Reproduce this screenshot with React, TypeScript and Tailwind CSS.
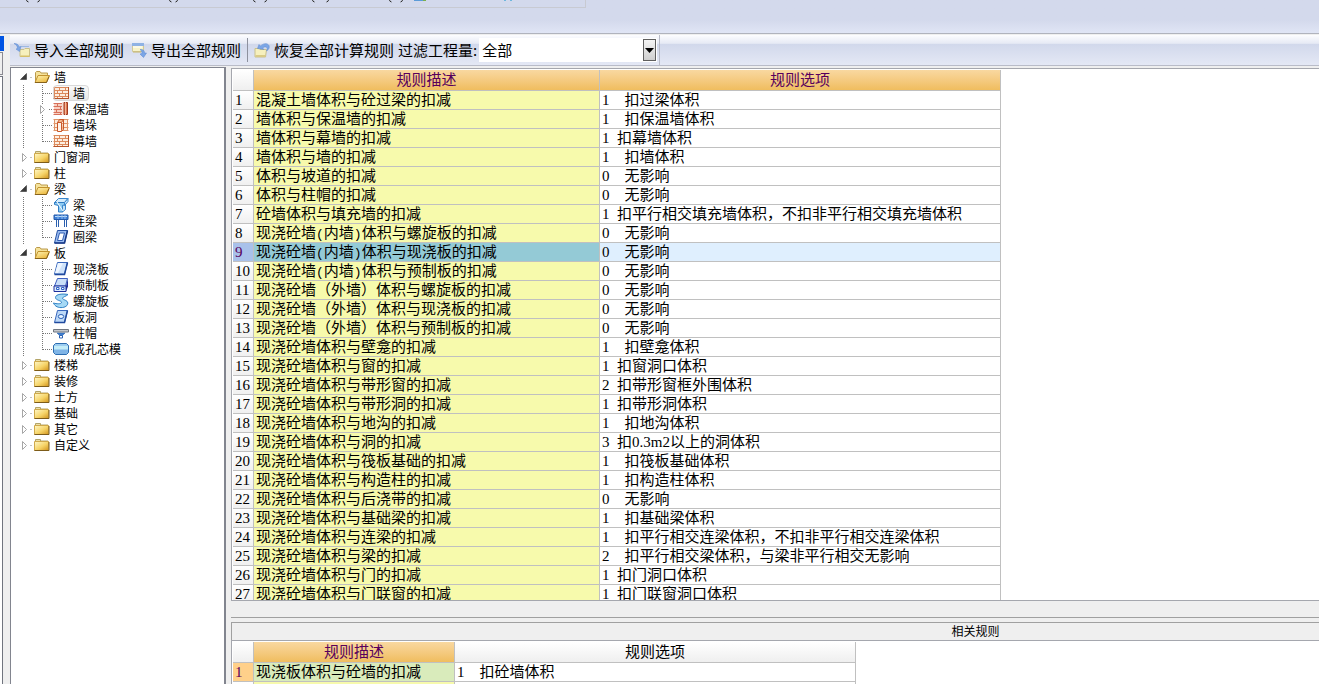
import type { ReactNode } from "react";
import { clsx } from "clsx";

type IconName =
  | "brick"
  | "insulated"
  | "pier"
  | "beam"
  | "linkBeam"
  | "ringBeam"
  | "slab"
  | "precast"
  | "spiral"
  | "hole"
  | "cap"
  | "core";

interface TreeChild {
  name: string;
  icon: IconName;
  expandable?: boolean;
  selected?: boolean;
}

interface TreeGroup {
  name: string;
  children?: TreeChild[];
}

interface Rule {
  desc: string;
  option: string;
}

const tree: TreeGroup[] = [
  {
    name: "墙",
    children: [
      { name: "墙", icon: "brick", selected: true },
      { name: "保温墙", icon: "insulated", expandable: true },
      { name: "墙垛", icon: "pier" },
      { name: "幕墙", icon: "brick" },
    ],
  },
  { name: "门窗洞" },
  { name: "柱" },
  {
    name: "梁",
    children: [
      { name: "梁", icon: "beam" },
      { name: "连梁", icon: "linkBeam" },
      { name: "圈梁", icon: "ringBeam" },
    ],
  },
  {
    name: "板",
    children: [
      { name: "现浇板", icon: "slab" },
      { name: "预制板", icon: "precast" },
      { name: "螺旋板", icon: "spiral" },
      { name: "板洞", icon: "hole" },
      { name: "柱帽", icon: "cap" },
      { name: "成孔芯模", icon: "core" },
    ],
  },
  { name: "楼梯" },
  { name: "装修" },
  { name: "土方" },
  { name: "基础" },
  { name: "其它" },
  { name: "自定义" },
];

const rules: Rule[] = [
  { desc: "混凝土墙体积与砼过梁的扣减", option: "1    扣过梁体积" },
  { desc: "墙体积与保温墙的扣减", option: "1    扣保温墙体积" },
  { desc: "墙体积与幕墙的扣减", option: "1  扣幕墙体积" },
  { desc: "墙体积与墙的扣减", option: "1    扣墙体积" },
  { desc: "体积与坡道的扣减", option: "0    无影响" },
  { desc: "体积与柱帽的扣减", option: "0    无影响" },
  { desc: "砼墙体积与填充墙的扣减", option: "1  扣平行相交填充墙体积，不扣非平行相交填充墙体积" },
  { desc: "现浇砼墙(内墙)体积与螺旋板的扣减", option: "0    无影响" },
  { desc: "现浇砼墙(内墙)体积与现浇板的扣减", option: "0    无影响" },
  { desc: "现浇砼墙(内墙)体积与预制板的扣减", option: "0    无影响" },
  { desc: "现浇砼墙（外墙）体积与螺旋板的扣减", option: "0    无影响" },
  { desc: "现浇砼墙（外墙）体积与现浇板的扣减", option: "0    无影响" },
  { desc: "现浇砼墙（外墙）体积与预制板的扣减", option: "0    无影响" },
  { desc: "现浇砼墙体积与壁龛的扣减", option: "1    扣壁龛体积" },
  { desc: "现浇砼墙体积与窗的扣减", option: "1  扣窗洞口体积" },
  { desc: "现浇砼墙体积与带形窗的扣减", option: "2  扣带形窗框外围体积" },
  { desc: "现浇砼墙体积与带形洞的扣减", option: "1  扣带形洞体积" },
  { desc: "现浇砼墙体积与地沟的扣减", option: "1    扣地沟体积" },
  { desc: "现浇砼墙体积与洞的扣减", option: "3  扣0.3m2以上的洞体积" },
  { desc: "现浇砼墙体积与筏板基础的扣减", option: "1    扣筏板基础体积" },
  { desc: "现浇砼墙体积与构造柱的扣减", option: "1    扣构造柱体积" },
  { desc: "现浇砼墙体积与后浇带的扣减", option: "0    无影响" },
  { desc: "现浇砼墙体积与基础梁的扣减", option: "1    扣基础梁体积" },
  { desc: "现浇砼墙体积与连梁的扣减", option: "1    扣平行相交连梁体积，不扣非平行相交连梁体积" },
  { desc: "现浇砼墙体积与梁的扣减", option: "2    扣平行相交梁体积，与梁非平行相交无影响" },
  { desc: "现浇砼墙体积与门的扣减", option: "1  扣门洞口体积" },
  { desc: "现浇砼墙体积与门联窗的扣减", option: "1  扣门联窗洞口体积" },
];

const Svg = ({ children }: { children: ReactNode }) => (
  <svg viewBox="0 0 16 16" className="size-4 shrink-0" aria-hidden="true">
    {children}
  </svg>
);

const ImportIcon = () => (
  <Svg>
    <path d="M6 7.500h4l1-1h4.500v8H6z" fill="#f6f0bd" stroke="#c9c08c" />
    <path d="M6.500 13.500h9v1.500h-9z" fill="#d6c069" />
    <path d="M7 4.500h8" stroke="#9db8e2" />
    <path d="M0 1.500c3 0 4.500 1 5 3.500l2-.5-1.500 5L2 7l1.500-.5C3.500 4 2.500 3 0 1.500z" fill="#7ba6e6" stroke="#5b86cc" strokeWidth=".5" />
  </Svg>
);

const ExportIcon = () => (
  <Svg>
    <path d="M1.500 1.500h11v8h-11z" fill="#f7f2c8" stroke="#cfc899" />
    <path d="M1 1h12v3H1z" fill="#8fb2e4" />
    <path d="M2 5h9" stroke="#fff" />
    <path d="M2 10h8" stroke="#c8b66b" />
    <path d="M9 7.500c3-.5 4.500 1 4.500 3.500h2L12.500 15.500 9 12l2-.5C11 9.500 10.500 8.500 9 7.500z" fill="#7ba6e6" stroke="#5b86cc" strokeWidth=".5" />
  </Svg>
);

const RestoreIcon = () => (
  <Svg>
    <path d="M1 6.500h4l1 1h6.500l-1 7.500H1z" fill="#f6f0bd" stroke="#c9c08c" />
    <path d="M1.500 13h10v2h-10z" fill="#d9cb87" />
    <path d="M3.500 6.500 5 2.500l1.500 1.500C9 1.500 13 .5 15 3.500c.7 2 0 4-2.500 5.500 1-2 1-3.500-.5-4-1.500-.3-2.500.3-3.500 1L10 7.500z" fill="#7ba6e6" stroke="#5b86cc" strokeWidth=".5" />
  </Svg>
);

const FolderClosed = () => (
  <Svg>
    <defs>
      <linearGradient id="fc" x1="0" y1="0" x2="1" y2="1">
        <stop offset="0" stopColor="#fff8c8" />
        <stop offset=".55" stopColor="#f6d468" />
        <stop offset="1" stopColor="#d2941c" />
      </linearGradient>
    </defs>
    <path d="M1.500 4V2.500h5V4h7.500v2h-12.500z" fill="#ecdfa8" stroke="#b3a468" />
    <path d="M.5 4.500h14v9H.5z" fill="url(#fc)" stroke="#d0a94a" />
    <path d="M.5 13.500h14.500V5" fill="none" stroke="#7d5c1a" />
  </Svg>
);

const FolderOpen = () => (
  <Svg>
    <defs>
      <linearGradient id="fo" x1="0" y1="0" x2=".7" y2="1">
        <stop offset="0" stopColor="#fff5b4" />
        <stop offset="1" stopColor="#ecb83e" />
      </linearGradient>
    </defs>
    <path d="M1.500 12V3.500l1-1H6l1 1.500h6.500V7" fill="#f5e29a" stroke="#bb9a4c" />
    <path d="M4 6.500h11.500L12.500 13.500H1z" fill="url(#fo)" stroke="#c2922e" />
    <path d="M1 13.500h11.500l2.500-6" fill="none" stroke="#86621c" />
  </Svg>
);

const leafIcons: Record<IconName, ReactNode> = {
  brick: (
    <>
      <path d="M1 2h14v12H1z" fill="#fdeee0" />
      <path
        d="M.5 2.500h15M.5 5.500h15M.5 8.500h15M.5 11.500h15M.5 13.500h15M1.500 2v12M6.500 2v3.500M12.500 2v3.500M4.500 5.500v3M9.500 5.500v3M6.500 8.500v3M12.500 8.500v3M4.500 11.500v2.500M9.500 11.500v2.500M15.500 2v12"
        stroke="#dc8a5c"
        fill="none"
      />
      <path d="M.5 13.500h15M15.500 2v12" stroke="#b8552a" fill="none" />
    </>
  ),
  insulated: (
    <>
      <path d="M1 2h9v12H1z" fill="#f8cfc0" />
      <path d="M.5 2.500h9M.5 5.500h9M.5 8.500h9M.5 11.500h9M.5 13.500h9M4.500 2v3.500M7.500 5.500v3M3.500 8.500v3M7.500 11.500v2" stroke="#d8705a" fill="none" />
      <path d="M9 1h3v13H9z" fill="#f7ddd2" />
      <path d="M11 1.500h3.500v12H11z" fill="#e07a52" stroke="#a03a20" />
      <path d="M12.500 1v13" stroke="#f3b699" />
    </>
  ),
  pier: (
    <>
      <path d="M1 2h14v12H1z" fill="#fdeee0" />
      <path d="M.5 2.500h15M.5 6.500h15M.5 10.500h15M.5 13.500h15M1.500 2v12M14.500 2v12" stroke="#e09468" fill="none" />
      <path d="M4.500 5.500h4v9h-4z" fill="#fff4ea" stroke="#c9582a" />
      <path d="m4.500 5.500 2-3h4l-2 3zM8.500 14.500l2-2v-10" fill="#f4b78c" stroke="#c9582a" />
    </>
  ),
  beam: (
    <>
      <path d="m1.500 5.500 4-4h9.500l-3.500 4z" fill="#d3ebfb" stroke="#3a87cc" />
      <path d="M1.500 5.500h10v3h-2v6.500h-4V8.500l-4-1z" fill="#8ecbf2" stroke="#2f7cc4" />
      <path d="m11.500 5.500 3.500-4v3l-3.500 4zM9.500 8.500l3-1v5l-3 2.500z" fill="#c4e3f8" stroke="#3a87cc" />
      <path d="m4 5 6 9" stroke="#fff" />
    </>
  ),
  linkBeam: (
    <>
      <path d="M1 2h14v4.500H1z" fill="#3e80d8" stroke="#2358a8" />
      <path d="M2 3.500h12" stroke="#bfdcf8" />
      <path d="M5 2v4M9 2v4M12 2v4" stroke="#8fbdf0" />
      <path d="M3.500 7v7M5.500 7v7M11.500 7v7M13.500 7v7" stroke="#2b5fae" />
    </>
  ),
  ringBeam: (
    <>
      <path d="M4.500 1.500h10L11.500 14H1.500z" fill="#9bbcf0" stroke="#2450a4" />
      <path d="M6.500 4h5L9.500 11.500H4.500z" fill="#fff" stroke="#2f5cb2" />
      <path d="M1.500 14h10l3-12.500" fill="none" stroke="#183a86" strokeWidth="1.500" />
    </>
  ),
  slab: (
    <>
      <path d="M4.500 1.500h10l-3 11.500H1.500z" fill="#cfe3fa" stroke="#3a68bd" />
      <path d="M5 2h5L5 12H2z" fill="#eef6ff" />
      <path d="M1.500 13.500h10l3-12" fill="none" stroke="#204a9e" strokeWidth="1.500" />
    </>
  ),
  precast: (
    <>
      <path d="M4.500 1.500h10L12.500 9h-11z" fill="#c9def8" stroke="#3d5fc0" />
      <path d="M1 9h12v5.500H1z" fill="#dcebfd" stroke="#1c2f9a" />
      <path d="m13 14.500 2-5v-8L13 9z" fill="#1f2f96" />
      <path d="M3.500 10.500h2.500v2H3.500zM8.500 10.500H11v2H8.500z" fill="#fff" stroke="#2e62c8" />
    </>
  ),
  spiral: (
    <path
      d="M15 1.500C10 .5 2.500 1 2.500 4.500c0 3 6.500 3 6 5-.5 1.700-5 1.500-8 .5 1.500 3.500 5 5 9 4.500s6-3 5-5.500c-1-2-5.500-2.500-5-4 .5-1.300 3.500-1.500 5.500-3.500z"
      fill="#a5d9f5"
      stroke="#2d7fc4"
    />
  ),
  hole: (
    <>
      <path d="M4.500 1.500h10l-3 12H1.500z" fill="#bcd8f7" stroke="#3a68bd" />
      <path d="M1.500 13.500h10l3-12" fill="none" stroke="#204a9e" strokeWidth="1.500" />
      <ellipse cx="8" cy="7.500" rx="2.700" ry="2" fill="#e9f4ff" stroke="#2d63b8" />
    </>
  ),
  cap: (
    <>
      <path d="M.5 4.500h15v2.500H.5z" fill="#c4c7cc" stroke="#707680" />
      <path d="M4 8h8l-2.500 2.500h-3z" fill="#3f7fd2" stroke="#265a9e" strokeWidth=".5" />
      <path d="M6.500 10.500h3v2.500h-3z" fill="#fff" stroke="#2c63b4" />
    </>
  ),
  core: (
    <>
      <path d="M2.500 2.500h11l2 2v7l-2 2h-11l-2-2v-7z" fill="#7fb4e6" stroke="#2d6db0" />
      <path d="M1 5h14v3.500H1z" fill="#c3ecf8" />
      <path d="M2.500 3h11l1.500 2H1z" fill="#9ccdf0" />
    </>
  ),
};

const Expanded = () => (
  <Svg>
    <path d="M10.500 4.500v6H4.500z" fill="#3a3a3a" stroke="#222" strokeWidth=".5" />
    <path d="M14.500 8.500h1.500" stroke="#888" strokeDasharray="1 1" />
  </Svg>
);

const Collapsed = () => (
  <Svg>
    <path d="m6.500 4.500 4 4-4 4z" fill="#fff" stroke="#a6a6a6" />
    <path d="M14.500 8.500h1.500" stroke="#888" strokeDasharray="1 1" />
  </Svg>
);

const Guide = ({ last, expandable }: { last: boolean; expandable?: boolean }) => (
  <svg viewBox="0 0 37 16" className="h-4 w-[37px] shrink-0" aria-hidden="true">
    <path d="M7.500 0v16" stroke="#777" strokeDasharray="1 1" />
    <path d={last ? "M26.500 0v9" : "M26.500 0v16"} stroke="#777" strokeDasharray="1 1" />
    <path d="M27 8.500h9" stroke="#777" strokeDasharray="1 1" />
    {expandable && (
      <>
        <path d="M23 3h9v11h-9z" fill="#fff" />
        <path d="m24.500 4.500 4 4-4 4z" fill="#fff" stroke="#a6a6a6" />
      </>
    )}
  </svg>
);

const TreeView = () => (
  <ul className="py-px pl-[5px] text-[12px] leading-4 text-black">
    {tree.map((group) => (
      <li key={group.name}>
        <div className="flex h-4 items-center">
          {group.children ? <Expanded /> : <Collapsed />}
          <span className="w-0.5" />
          {group.children ? <FolderOpen /> : <FolderClosed />}
          <span className="pl-1">{group.name}</span>
        </div>
        {group.children && (
          <ul>
            {group.children.map((child, i) => (
              <li key={child.name} className="flex h-4 items-center">
                <Guide last={i === group.children!.length - 1} expandable={child.expandable} />
                <span
                  className={clsx(
                    "flex h-4 items-center gap-1 rounded-sm pr-1",
                    child.selected && "bg-linear-to-b from-[#fafafa] to-[#e6e6e6] outline outline-[#d9d9d9] -outline-offset-1"
                  )}
                >
                  <Svg>{leafIcons[child.icon]}</Svg>
                  {child.name}
                </span>
              </li>
            ))}
          </ul>
        )}
      </li>
    ))}
  </ul>
);

// half-width brackets take half of a Chinese character
const RuleText = ({ text }: { text: string }) => (
  <>
    {text.split(/([()])/).map((part, i) =>
      part === "(" || part === ")" ? (
        <span key={i} className="font-['Liberation_Mono'] text-[13px] leading-none">
          {part}
        </span>
      ) : (
        part
      )
    )}
  </>
);

const cell = "h-[19px] overflow-hidden border-r border-b border-[#c0c0c0] p-0 pl-0.5 whitespace-pre";
const head = "h-[21px] border-r border-b border-[#c0c0c0] p-0 font-normal";
const orange = "bg-linear-to-b from-[#f9d8a0] to-[#f0bd5e] text-[#58005c]";
const plain = "bg-linear-to-b from-white to-[#efefef]";
const table =
  "table-fixed border-separate border-spacing-0 text-left font-['Liberation_Serif','Noto_Sans_CJK_SC',sans-serif] text-[15px] leading-[18px] text-black";

const RulesTable = () => (
  <table className={clsx(table, "w-[768px]")}>
    <colgroup>
      <col className="w-[21px]" />
      <col className="w-[346px]" />
      <col className="w-[401px]" />
    </colgroup>
    <thead>
      <tr>
        <td className={clsx(head, plain)} />
        <th className={clsx(head, orange, "text-center")}>规则描述</th>
        <th className={clsx(head, orange, "text-center")}>规则选项</th>
      </tr>
    </thead>
    <tbody>
      {rules.map((rule, i) => {
        const active = i === 8;
        return (
          <tr key={rule.desc}>
            <td className={clsx(cell, active ? "bg-[#a9c1ea] text-[#58005c]" : "bg-linear-to-b from-white to-[#f0f0f0]")}>
              {i + 1}
            </td>
            <td className={clsx(cell, active ? "bg-[#94cad6]" : "bg-[#f7faac]")}>
              <RuleText text={rule.desc} />
            </td>
            <td className={clsx(cell, active ? "bg-[#dfeffe]" : "bg-white")}>{rule.option}</td>
          </tr>
        );
      })}
    </tbody>
  </table>
);

const RelatedTable = () => (
  <table className={clsx(table, "w-[623px]")}>
    <colgroup>
      <col className="w-[21px]" />
      <col className="w-[201px]" />
      <col className="w-[401px]" />
    </colgroup>
    <thead>
      <tr>
        <td className={clsx(head, plain)} />
        <th className={clsx(head, orange, "text-center")}>规则描述</th>
        <th className={clsx(head, plain, "text-center")}>规则选项</th>
      </tr>
    </thead>
    <tbody>
      <tr>
        <td className={clsx(cell, "bg-[#ffd08a] text-[#58005c]")}>1</td>
        <td className={clsx(cell, "bg-[#d9ebbb]")}>现浇板体积与砼墙的扣减</td>
        <td className={clsx(cell, "bg-white")}>{"1    扣砼墙体积"}</td>
      </tr>
      <tr>
        <td className={clsx(cell, plain)} />
        <td className={clsx(cell, "bg-[#f7faac]")} />
        <td className={clsx(cell, "bg-white")} />
      </tr>
    </tbody>
  </table>
);

const Toolbar = () => (
  <div className="flex h-[31px] border-b border-[#b9bcc8] bg-[linear-gradient(#fdfdff,#e6eaf5_28%,#d1d8eb_30%,#e4e8f5)] text-[15px] leading-5 text-black">
    <div className="flex h-full shrink-0 items-center border-r border-[#b9bcc8] pr-0.5 pl-1 whitespace-nowrap">
      <button className="flex items-center gap-1">
        <ImportIcon />
        导入全部规则
      </button>
      <button className="ml-[7px] flex items-center gap-1">
        <ExportIcon />
        导出全部规则
      </button>
      <span className="mx-1.5 h-6 w-px bg-[#8d919e]" />
      <button className="flex items-center gap-1">
        <RestoreIcon />
        恢复全部计算规则
      </button>
      <label htmlFor="quantity" className="ml-1">
        过滤工程量:
      </label>
      <div className="relative ml-0.5">
        <select id="quantity" className="h-6 w-[178px] appearance-none bg-white pl-[3px] text-[15px] leading-5 outline-none">
          <option>全部</option>
        </select>
        <span className="pointer-events-none absolute top-px right-px flex h-[22px] w-[13px] items-center justify-center border border-[#5f5f5f] bg-linear-to-b from-[#f4f4f4] to-[#cfcfcf]">
          <svg viewBox="0 0 9 5" className="h-[5px] w-[9px] shrink-0" aria-hidden="true">
            <path d="M0 0h9L4.500 5z" fill="#000" />
          </svg>
        </span>
      </div>
    </div>
  </div>
);

// lower edge of the menu row, the rest is scrolled out above
const MenuEdge = () => (
  <div className="flex h-[34px] items-start border-b border-[#b0b3bd] bg-linear-to-b from-[#d3d9ec] from-60% to-[#e0e5f5]">
    <div className="flex h-2 w-[586px] items-start overflow-hidden border-r border-b border-[#c8cad2] pl-6">
      <svg viewBox="0 0 560 4" className="h-1 w-[560px] shrink-0" aria-hidden="true">
        <path
          d="M2.500 0q0 1.500 2 2M15.500 0q0 1.500-2 2M145.500 0q0 1.500 2 2M153.500 0q0 1.500-2 2M229.500 0q0 1.500 2 2M242.500 0q0 1.500-2 2M288.500 0q0 1.500 2 2M304.500 0q0 1.500-2 2M365.500 0q0 1.500 2 2M378.500 0q0 1.500-2 2"
          stroke="#333"
          fill="none"
        />
        <path d="M390 0h9v1h-9z" fill="#5b9bd8" />
        <path d="M399 0h3v1h-3z" fill="#7ab04c" />
        <path d="M480 0h2v1h-2zM486 0h2v1h-2z" fill="#6fb7dd" />
      </svg>
    </div>
  </div>
);

const App = () => {
  return (
    <div className="flex h-screen flex-col overflow-hidden bg-[#efefef] font-['Noto_Sans_CJK_SC',sans-serif]">
      <MenuEdge />
      <div className="flex min-h-0 flex-1">
        {/* edge of the panel on the left */}
        <div className="flex w-[10px] shrink-0 flex-col pt-0.5">
          <div className="h-[15px] w-1 bg-[#0054e3]" />
          <div className="mt-px h-[23px] w-[3px] border-y border-r border-[#8a8a92] bg-[#efefef]" />
          <div className="mt-px w-[3px] flex-1 border-t border-r border-[#70747e] bg-white" />
        </div>

        <div className="flex min-w-0 flex-1 flex-col pt-px">
          <Toolbar />
          <div className="flex min-h-0 flex-1">
            <div className="mt-px w-[216px] shrink-0 overflow-hidden border-t border-r-2 border-l border-[#82858f] bg-white">
              <TreeView />
            </div>

            <div className="flex min-w-0 flex-1 flex-col pl-[5px]">
              <div className="mt-0.5 min-h-0 flex-1 overflow-hidden border-y border-l border-[#a5a7ae] bg-white pt-px pl-px">
                <RulesTable />
              </div>
              <div className="h-[17px] shrink-0 border-b border-[#a0a0a0]" />
              <div className="mt-1 h-[18px] shrink-0 border-t border-l border-[#a0a0a0] pl-[400px] text-center text-[12px] leading-4 text-black">
                相关规则
              </div>
              <div className="h-11 shrink-0 overflow-hidden border-t border-l border-[#a5a7ae] bg-white pt-px pl-px">
                <RelatedTable />
              </div>
            </div>
          </div>
        </div>
      </div>
    </div>
  );
};

export default App;
